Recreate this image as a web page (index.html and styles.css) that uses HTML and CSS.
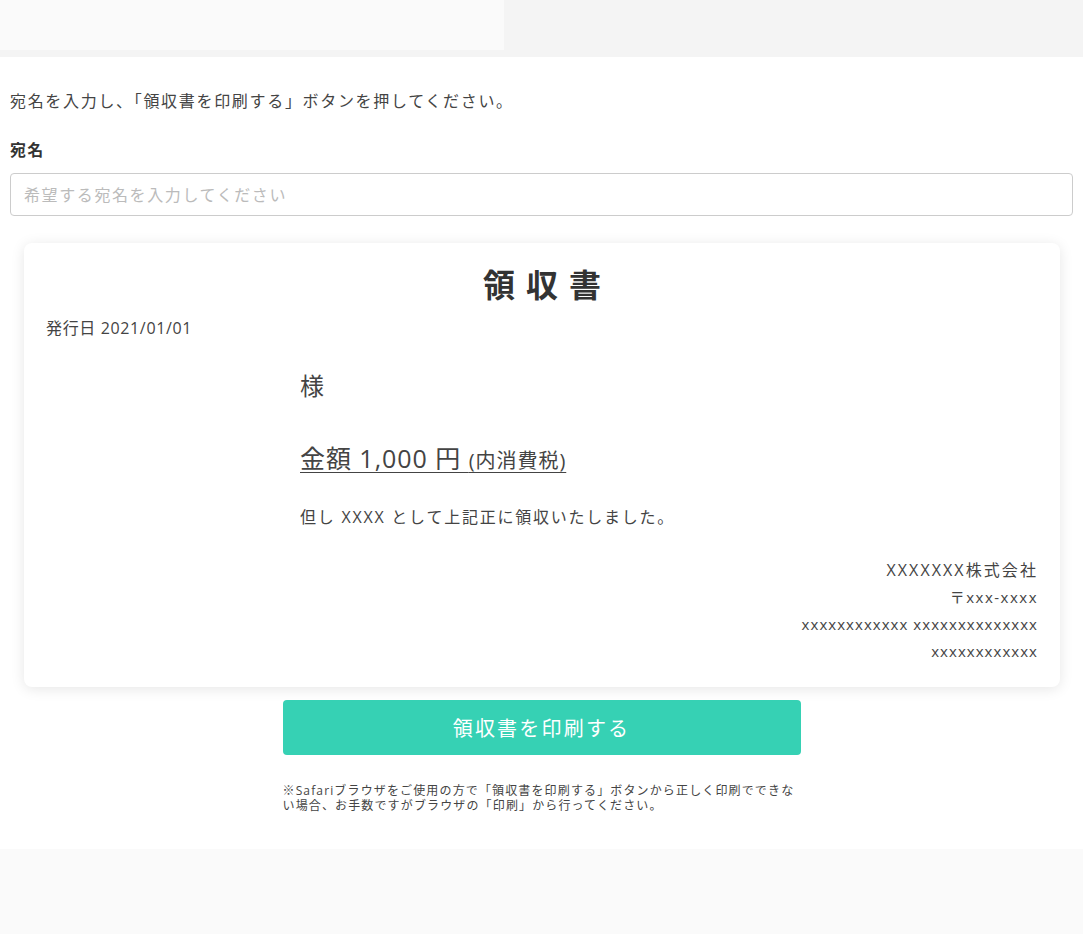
FILE: index.html
```html
<!DOCTYPE html>
<html lang="ja">
<head>
<meta charset="utf-8">
<link rel="stylesheet" href="styles.css">
</head>
<body>
<header class="top">
  <div class="top-box"></div>
</header>
<main class="main">
  <p class="intro">宛名を入力し、「領収書を印刷する」ボタンを押してください。</p>
  <label class="label" for="name">宛名</label>
  <input class="input" id="name" type="text" placeholder="希望する宛名を入力してください">
  <section class="card">
    <h1 class="title">領収書</h1>
    <p class="date">発行日 2021/01/01</p>
    <div class="body">
      <p class="sama">様</p>
      <p class="amount"><span class="big">金額 1,000 円 </span><span class="small">(内消費税)</span></p>
      <p class="tadashi">但し XXXX として上記正に領収いたしました。</p>
    </div>
    <div class="issuer">
      <p class="company">XXXXXXX株式会社</p>
      <p class="addr zip">〒xxx-xxxx</p>
      <p class="addr">xxxxxxxxxxxx xxxxxxxxxxxxxx</p>
      <p class="addr">xxxxxxxxxxxx</p>
    </div>
  </section>
  <div class="actions">
    <button class="print" type="button">領収書を印刷する</button>
    <p class="note">※Safariブラウザをご使用の方で「領収書を印刷する」ボタンから正しく印刷でできない場合、お手数ですがブラウザの「印刷」から行ってください。</p>
  </div>
</main>
<footer class="bottom"></footer>
</body>
</html>
```
FILE: styles.css
```css
* { box-sizing: border-box; }
html, body { margin: 0; padding: 0; }
body {
  font-family: "Open Sans", "Noto Sans CJK JP", sans-serif;
  color: #333;
  background: #fafafa;
  letter-spacing: 0.08em;
}
p { margin: 0; }
.top {
  height: 57px;
  background: #f4f4f4;
}
.top-box {
  width: 504px;
  height: 50px;
  background: #fafafa;
}
.main {
  background: #fff;
  padding: 26px 10px 36px;
  display: flex;
  flex-direction: column;
}
.intro {
  font-size: 16px;
  line-height: 36px;
  color: #444;
  letter-spacing: 0.105em;
}
.label {
  margin-top: 19px;
  font-size: 16px;
  font-weight: 700;
  line-height: 24px;
}
.input {
  margin-top: 11px;
  height: 43px;
  width: 100%;
  border: 1px solid #ccc;
  border-radius: 4px;
  padding: 0 13px;
  font-family: inherit;
  font-size: 16px;
  letter-spacing: 0.1em;
  color: #333;
  outline: none;
}
.input::placeholder { color: #bbb; }
.card {
  margin: 27px 13px 0 14px;
  background: #fff;
  border-radius: 8px;
  box-shadow: 0 2px 14px rgba(0,0,0,0.10);
  padding: 14px 22px 22px 22px;
  display: flex;
  flex-direction: column;
}
.title {
  margin: 0;
  text-align: center;
  font-size: 32px;
  font-weight: 700;
  letter-spacing: 11px;
  text-indent: 11px;
  line-height: 56px;
  color: #333;
}
.date {
  font-size: 16px;
  line-height: 30px;
  color: #444;
  letter-spacing: 0.04em;
}
.body {
  width: 500px;
  align-self: center;
  margin-left: 16px;
  padding-top: 21px;
}
.sama {
  font-size: 24px;
  line-height: 44px;
  color: #444;
}
.amount {
  margin-top: 28px;
  line-height: 44px;
  color: #444;
  letter-spacing: 0.06em;
  text-decoration: underline;
  text-underline-offset: 4px;
  text-decoration-thickness: 1px;
}
.big { font-size: 25px; }
.small { font-size: 20px; }
.tadashi {
  margin-top: 19px;
  font-size: 16px;
  line-height: 28px;
  color: #444;
  letter-spacing: 0.11em;
}
.issuer {
  margin-top: 26px;
  text-align: right;
  color: #444;
}
.company { font-size: 16px; line-height: 27px; letter-spacing: 0.13em; }
.addr { font-size: 15px; line-height: 27px; letter-spacing: 0.07em; }
.zip { letter-spacing: 0.1em; }
.actions {
  width: 518px;
  align-self: center;
  margin-top: 13px;
}
.print {
  display: block;
  width: 100%;
  height: 55px;
  border: none;
  border-radius: 4px;
  background: #36d1b4;
  color: #fff;
  font-family: inherit;
  font-size: 20px;
  letter-spacing: 0.11em;
}
.note {
  margin-top: 28px;
  font-size: 12px;
  line-height: 15px;
  color: #444;
  letter-spacing: 0.095em;
}
.bottom {
  height: 85px;
  background: #fafafa;
}
```
